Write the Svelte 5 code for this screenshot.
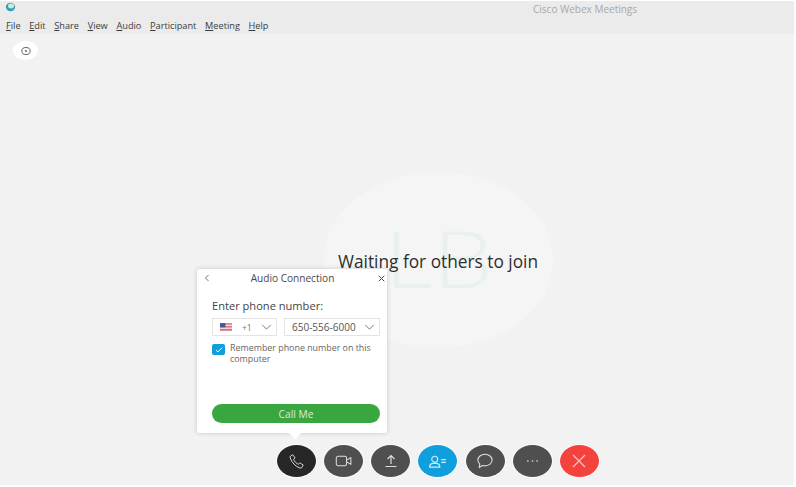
<script>
  const menus = [
    ['F', 'ile'], ['E', 'dit'], ['S', 'hare'], ['V', 'iew'], ['A', 'udio'],
    ['P', 'articipant'], ['M', 'eeting'], ['H', 'elp']
  ];
</script>

<div class="window">
  <header class="titlebar">
    <div class="title-row">
      <svg class="logo" viewBox="0 0 12 10" width="12" height="10">
        <ellipse cx="5.5" cy="5" rx="4.6" ry="4.2" fill="#2f9fb5" />
        <ellipse cx="6" cy="4" rx="3" ry="2.4" fill="#c9ebd8" />
      </svg>
      <span class="app-title">Cisco Webex Meetings</span>
    </div>
    <nav class="menu">
      {#each menus as m}
        <span class="menu-item"><u>{m[0]}</u>{m[1]}</span>
      {/each}
    </nav>
  </header>

  <main class="stage">
    <button class="pill" aria-label="Info">
      <svg viewBox="0 0 12 12" width="10" height="10" fill="none" stroke="#555" stroke-width="1.1">
        <ellipse cx="6" cy="6" rx="5" ry="4.2" />
        <circle cx="6" cy="6" r="1.1" fill="#555" stroke="none" />
      </svg>
    </button>

    <div class="avatar"><span>LB</span></div>
    <div class="waiting">Waiting for others to join</div>

    <section class="popover">
      <div class="pop-head">
        <svg viewBox="0 0 8 10" width="6" height="8" fill="none" stroke="#555" stroke-width="1.1"><path d="M6 1 2 5l4 4" /></svg>
        <span class="pop-title">Audio Connection</span>
        <svg viewBox="0 0 10 10" width="7" height="7" fill="none" stroke="#444" stroke-width="1.4"><path d="M1 1l8 8M9 1l-8 8" /></svg>
      </div>
      <div class="pop-body">
        <div class="label">Enter phone number:</div>
        <div class="fields">
          <div class="field country">
            <svg class="flag" viewBox="0 0 11 7" width="12" height="8">
              <rect width="11" height="7" fill="#d9737f" />
              <rect y="1.4" width="11" height="1.2" fill="#f3e3e6" />
              <rect y="4" width="11" height="1.2" fill="#f3e3e6" />
              <rect width="5" height="3.8" fill="#43559b" />
            </svg>
            <span class="code">+1</span>
            <svg class="chev" viewBox="0 0 12 7" width="11" height="6" fill="none" stroke="#666" stroke-width="1"><path d="M1 1l5 5 5-5" /></svg>
          </div>
          <div class="field phone">
            <span>650-556-6000</span>
            <svg class="chev" viewBox="0 0 12 7" width="11" height="6" fill="none" stroke="#666" stroke-width="1"><path d="M1 1l5 5 5-5" /></svg>
          </div>
        </div>
        <div class="remember">
          <span class="check">
            <svg viewBox="0 0 10 8" width="8" height="6" fill="none" stroke="#fff" stroke-width="1.3"><path d="M1 4l2.6 2.6L9 1" /></svg>
          </span>
          <span class="remember-text">Remember phone number on this computer</span>
        </div>
        <button class="call">Call Me</button>
      </div>
      <span class="tail"></span>
    </section>

    <div class="toolbar">
      <button class="tool active" aria-label="Audio">
        <svg viewBox="0 0 20 20" width="17" height="17" fill="none" stroke="#ddd" stroke-width="1.1" stroke-linejoin="round">
          <path d="M3 3.5 5.600 2l2.700 3.800-1.700 1.600c.8 2.400 3 4.800 5.600 5.800l1.700-1.600 4 2.500-1.500 2.800c-.5.800-1.400 1-2.300.8C9 16 4.500 11.500 2.600 5.700 2.400 4.900 2.500 4 3 3.500Z" />
        </svg>
      </button>
      <button class="tool" aria-label="Video">
        <svg viewBox="0 0 20 14" width="18" height="12" fill="none" stroke="#ddd" stroke-width="1.2" stroke-linejoin="round">
          <rect x="1" y="1.500" width="12" height="11" rx="2" />
          <path d="M13 6l5-3v8l-5-3" />
        </svg>
      </button>
      <button class="tool" aria-label="Share">
        <svg viewBox="0 0 14 14" width="14" height="14" fill="none" stroke="#ddd" stroke-width="1.200">
          <path d="M7 10V2M3.500 5 7 1.500 10.500 5M1.500 12.500h11" />
        </svg>
      </button>
      <button class="tool blue" aria-label="Participants">
        <svg viewBox="0 0 20 14" width="19" height="13" fill="none" stroke="#d5eef9" stroke-width="1.200">
          <circle cx="7" cy="4.500" r="3.200" />
          <path d="M1.500 13c0-2.500 2-3.800 3.500-4h4c1.500.2 3.500 1.500 3.500 4Z" />
          <path d="M14 5h5M14 8h5" />
        </svg>
      </button>
      <button class="tool" aria-label="Chat">
        <svg viewBox="0 0 20 18" width="18" height="16" fill="none" stroke="#ddd" stroke-width="1.200" stroke-linejoin="round">
          <path d="M10 1.500c4.600 0 8 2.900 8 6.500s-3.400 6.500-8 6.500c-1 0-2-.1-3-.5l-3.500 2.500.6-3.900C2.900 11.500 2 9.800 2 8c0-3.600 3.400-6.500 8-6.500Z" />
        </svg>
      </button>
      <button class="tool" aria-label="More">
        <svg viewBox="0 0 14 4" width="13" height="4" fill="#b5b5b5">
          <circle cx="2" cy="2" r="1" /><circle cx="7" cy="2" r="1" /><circle cx="12" cy="2" r="1" />
        </svg>
      </button>
      <button class="tool red" aria-label="Leave">
        <svg viewBox="0 0 14 14" width="14" height="14" fill="none" stroke="#fbc9c6" stroke-width="1.100">
          <path d="M1 1l12 12M13 1 1 13" />
        </svg>
      </button>
    </div>
  </main>
</div>

<style>
  :global(body) {
    margin: 0;
    background: #fff;
  }
  .window {
    width: 794px;
    height: 484px;
    margin-top: 1px;
    display: flex;
    flex-direction: column;
    background: #f2f2f2;
    font-family: "Open Sans", "Noto Sans", sans-serif;
    overflow: hidden;
  }
  .titlebar {
    height: 33px;
    flex: none;
    background: #ebebeb;
    display: flex;
    flex-direction: column;
  }
  .title-row {
    height: 18px;
    position: relative;
    display: flex;
    align-items: center;
    padding-left: 5px;
    box-sizing: border-box;
  }
  .logo {
    margin-bottom: 6px;
  }
  .app-title {
    position: absolute;
    left: 533px;
    top: 0;
    font-size: 10px;
    line-height: 16px;
    color: #a8a8a8;
  }
  .menu {
    display: flex;
    gap: 8.700px;
    padding-left: 6px;
    font-size: 9.200px;
    line-height: 13px;
    color: #3c3c3c;
  }
  .menu u {
    text-underline-offset: 1px;
  }
  .stage {
    position: relative;
    flex: 1;
  }
  .pill {
    position: absolute;
    left: 13px;
    top: 7px;
    width: 25px;
    height: 19px;
    border: none;
    padding: 0;
    border-radius: 50%;
    background: #fff;
    display: flex;
    align-items: center;
    justify-content: center;
  }
  .avatar {
    position: absolute;
    left: 324px;
    top: 138px;
    width: 229px;
    height: 176px;
    border-radius: 50%;
    background: #f5f5f5;
    display: flex;
    align-items: center;
    justify-content: center;
  }
  .avatar span {
    font-size: 80px;
    font-weight: 300;
    line-height: 1;
    color: #e9f1ef;
    margin-top: -6px;
    transform: scaleX(1.18);
  }
  .waiting {
    position: absolute;
    left: 338px;
    top: 217px;
    font-size: 17.300px;
    line-height: 22px;
    color: #2e2e2e;
    white-space: nowrap;
  }
  .popover {
    position: absolute;
    left: 197px;
    top: 235px;
    width: 190px;
    height: 164px;
    background: #fff;
    border-radius: 3px;
    box-shadow: 0 0 5px rgba(0, 0, 0, 0.18);
    display: flex;
    flex-direction: column;
    color: #444;
  }
  .pop-head {
    height: 18px;
    padding: 0 2px 0 7px;
    display: flex;
    align-items: center;
    justify-content: space-between;
  }
  .pop-title {
    font-size: 10.100px;
    color: #4a4a4a;
    margin-left: -3px;
  }
  .pop-body {
    flex: 1;
    padding: 12px 7px 10px 15px;
    display: flex;
    flex-direction: column;
  }
  .label {
    font-size: 11.100px;
    line-height: 14px;
    color: #444;
  }
  .fields {
    display: flex;
    gap: 7px;
    margin-top: 5px;
  }
  .field {
    height: 18px;
    box-sizing: border-box;
    border: 1px solid #e4e4e4;
    display: flex;
    align-items: center;
    font-size: 10px;
    color: #555;
  }
  .country {
    width: 65px;
    padding: 0 4px 0 7px;
  }
  .code {
    margin-left: 10px;
    color: #777;
    font-size: 8.500px;
  }
  .country .chev {
    margin-left: auto;
  }
  .phone {
    width: 96px;
    padding: 0 4px 0 7px;
    justify-content: space-between;
  }
  .remember {
    display: flex;
    gap: 5px;
    margin-top: 7px;
  }
  .check {
    width: 13px;
    height: 11px;
    flex: none;
    margin-top: 1px;
    border-radius: 2px;
    background: #0f9fdc;
    display: flex;
    align-items: center;
    justify-content: center;
  }
  .remember-text {
    width: 150px;
    font-size: 8.900px;
    line-height: 10.500px;
    color: #666;
  }
  .call {
    margin-top: auto;
    width: 168px;
    height: 19px;
    border: none;
    border-radius: 10px;
    background: #3aa640;
    color: #d9eeda;
    font: inherit;
    font-size: 10.200px;
    padding: 0;
  }
  .tail {
    position: absolute;
    left: 92px;
    bottom: -6px;
    width: 12px;
    height: 12px;
    background: #fff;
    transform: rotate(45deg) scale(0.75);
  }
  .toolbar {
    position: absolute;
    left: 277px;
    top: 411px;
    display: flex;
    gap: 8.170px;
  }
  .tool {
    width: 39px;
    height: 32px;
    padding: 0;
    border: none;
    border-radius: 50%;
    background: #4f4f4f;
    box-shadow: 0 0 0 1px #fafafa;
    display: flex;
    align-items: center;
    justify-content: center;
  }
  .tool.active {
    background: #272727;
  }
  .tool.blue {
    background: #0f9fdc;
  }
  .tool.red {
    background: #f4423d;
  }
</style>
